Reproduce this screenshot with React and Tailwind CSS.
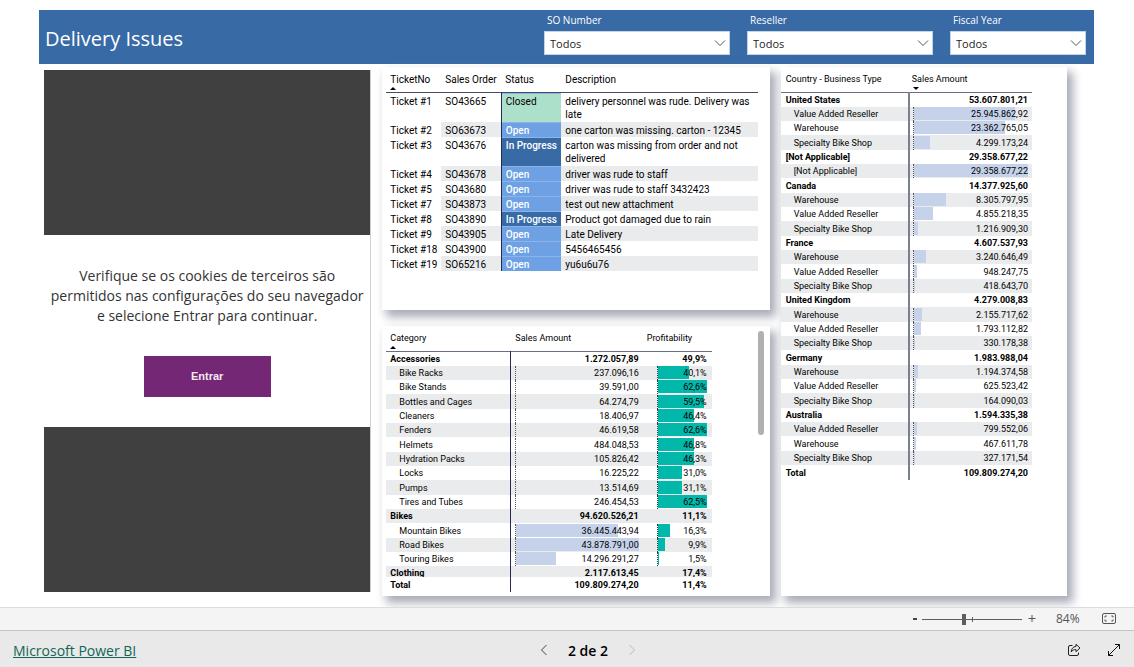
import React, { useState } from "react";

const tickets = [
  ["Ticket #1", "SO43665", "Closed", "delivery personnel was rude. Delivery was late"],
  ["Ticket #2", "SO63673", "Open", "one carton was missing. carton - 12345"],
  ["Ticket #3", "SO43676", "In Progress", "carton was missing from order and not delivered"],
  ["Ticket #4", "SO43678", "Open", "driver was rude to staff"],
  ["Ticket #5", "SO43680", "Open", "driver was rude to staff 3432423"],
  ["Ticket #7", "SO43873", "Open", "test out new attachment"],
  ["Ticket #8", "SO43890", "In Progress", "Product got damaged due to rain"],
  ["Ticket #9", "SO43905", "Open", "Late Delivery"],
  ["Ticket #18", "SO43900", "Open", "5456465456"],
  ["Ticket #19", "SO65216", "Open", "yu6u6u76"],
];

const statusClass = {
  Closed: "bg-[#ade0ca] text-black",
  Open: "bg-[#6ea1e3] font-medium text-white",
  "In Progress": "bg-[#386aa6] font-medium text-white",
};

const products = [
  { name: "Accessories", amount: "1.272.057,89", profit: "49,9%", group: true },
  { name: "Bike Racks", amount: "237.096,16", profit: "40,1%" },
  { name: "Bike Stands", amount: "39.591,00", profit: "62,6%" },
  { name: "Bottles and Cages", amount: "64.274,79", profit: "59,5%" },
  { name: "Cleaners", amount: "18.406,97", profit: "46,4%" },
  { name: "Fenders", amount: "46.619,58", profit: "62,6%" },
  { name: "Helmets", amount: "484.048,53", profit: "46,8%" },
  { name: "Hydration Packs", amount: "105.826,42", profit: "46,3%" },
  { name: "Locks", amount: "16.225,22", profit: "31,0%" },
  { name: "Pumps", amount: "13.514,69", profit: "31,1%" },
  { name: "Tires and Tubes", amount: "246.454,53", profit: "62,5%" },
  { name: "Bikes", amount: "94.620.526,21", profit: "11,1%", group: true },
  { name: "Mountain Bikes", amount: "36.445.443,94", profit: "16,3%" },
  { name: "Road Bikes", amount: "43.878.791,00", profit: "9,9%" },
  { name: "Touring Bikes", amount: "14.296.291,27", profit: "1,5%" },
];

const countries = [
  ["United States", "53.607.801,21", true],
  ["Value Added Reseller", "25.945.862,92"],
  ["Warehouse", "23.362.765,05"],
  ["Specialty Bike Shop", "4.299.173,24"],
  ["[Not Applicable]", "29.358.677,22", true],
  ["[Not Applicable]", "29.358.677,22"],
  ["Canada", "14.377.925,60", true],
  ["Warehouse", "8.305.797,95"],
  ["Value Added Reseller", "4.855.218,35"],
  ["Specialty Bike Shop", "1.216.909,30"],
  ["France", "4.607.537,93", true],
  ["Warehouse", "3.240.646,49"],
  ["Value Added Reseller", "948.247,75"],
  ["Specialty Bike Shop", "418.643,70"],
  ["United Kingdom", "4.279.008,83", true],
  ["Warehouse", "2.155.717,62"],
  ["Value Added Reseller", "1.793.112,82"],
  ["Specialty Bike Shop", "330.178,38"],
  ["Germany", "1.983.988,04", true],
  ["Warehouse", "1.194.374,58"],
  ["Value Added Reseller", "625.523,42"],
  ["Specialty Bike Shop", "164.090,03"],
  ["Australia", "1.594.335,38", true],
  ["Value Added Reseller", "799.552,06"],
  ["Warehouse", "467.611,78"],
  ["Specialty Bike Shop", "327.171,54"],
];

const toNumber = (s) => parseFloat(s.replace("%", "").replace(/\./g, "").replace(",", "."));

function SortArrow({ down }) {
  return (
    <svg className="absolute bottom-0.5 left-1 h-[3px] w-[6px]" viewBox="0 0 6 3" aria-hidden="true">
      <path d={down ? "M0 0h6L3 3z" : "M0 3h6L3 0z"} fill="#000" />
    </svg>
  );
}

function BarCell({ text, max, color, axis }) {
  return (
    <div className={`grid h-[14px] border-l border-dotted ${axis}`}>
      <span
        className={`col-start-1 row-start-1 h-[13px] ${color}`}
        style={{ width: `${(toNumber(text) / max) * 100}%` }}
      />
      <span className="col-start-1 row-start-1 text-right">{text}</span>
    </div>
  );
}

function Slicer({ id, label, width }) {
  return (
    <div className={`flex flex-col gap-1 ${width}`}>
      <label htmlFor={id} className="pl-[3px] text-[10px] leading-[14px] text-white">
        {label}
      </label>
      <div className="relative">
        <select
          id={id}
          className="block h-6 w-full appearance-none border border-[#c5d3e6] bg-white pt-0.5 pl-[5px] text-[11px] text-[#252423] outline-none"
        >
          <option>Todos</option>
        </select>
        <svg
          className="pointer-events-none absolute top-2 right-1 h-2 w-3"
          viewBox="0 0 12 8"
          fill="none"
          stroke="#555"
          aria-hidden="true"
        >
          <path d="M1 1.500 6 6.500 11 1.500" />
        </svg>
      </div>
    </div>
  );
}

const panel = "bg-white shadow-[5px_6px_9px_1px_#a9acb8]";
const matrixTable = "w-full table-fixed border-collapse text-left font-['Roboto',sans-serif] text-[9px] leading-[14px] text-black";
const matrixRow = "h-[14px] even:bg-[#eaebec] nth-[3n+1]:h-[15px]";

function TicketsTable() {
  return (
    <section className={`${panel} h-[243px] pr-3 pl-1`}>
      <table className="w-full table-fixed border-collapse text-left font-['Roboto',sans-serif] text-[10px] leading-[13px] text-black">
        <thead>
          <tr className="h-[25px] border-b border-[#4a4a68] align-top">
            <th className="relative w-[55px] pt-1.5 pl-1 font-normal">
              TicketNo
              <SortArrow />
            </th>
            <th className="w-[60px] pt-1.5 pl-1 font-normal">Sales Order</th>
            <th className="w-[60px] pt-1.5 pl-1 font-normal">Status</th>
            <th className="pt-1.5 pl-1 font-normal">Description</th>
          </tr>
        </thead>
        <tbody>
          {tickets.map(([no, order, status, text]) => (
            <tr key={no} className="group align-top first:h-[30px] nth-3:h-[29px]">
              <td className="pt-0.5 pl-1">{no}</td>
              <td className="pt-0.5 pl-1 group-even:bg-[#eaebec]">{order}</td>
              <td
                className={`border-l border-l-[#252a50] pt-0.5 pl-1 whitespace-nowrap shadow-[inset_0_1px_#8db4e8] ${statusClass[status]}`}
              >
                {status}
              </td>
              <td className="pt-0.5 pl-1 group-even:bg-[#eaebec]">{text}</td>
            </tr>
          ))}
        </tbody>
      </table>
    </section>
  );
}

function ProductMatrix() {
  return (
    <section className={`${panel} flex h-[270px] pr-1.5 pl-1`}>
      <div className="flex-1">
        <table className={matrixTable}>
          <thead>
            <tr className="h-[25px] border-b border-[#6b6f85] align-top">
              <th className="relative w-[124px] pt-[5px] pl-1 font-normal">
                Category
                <SortArrow />
              </th>
              <th className="pt-[5px] pl-[5px] font-normal">Sales Amount</th>
              <th className="w-[69px] pt-[5px] pl-1 font-normal">Profitability</th>
            </tr>
          </thead>
          <tbody>
            {products.map((p) => (
              <tr key={p.name} className={matrixRow}>
                <td className={`border-r border-[#252a50] py-0 ${p.group ? "pl-1 font-bold" : "pl-[13px]"}`}>
                  {p.name}
                </td>
                <td className={`py-0 pr-1 pl-1 text-right ${p.group ? "font-bold" : ""}`}>
                  {p.group ? (
                    p.amount
                  ) : (
                    <BarCell
                      text={p.amount}
                      max={43878791}
                      color={toNumber(p.amount) > 1000000 ? "bg-[#c5d2ea]" : ""}
                      axis="border-[#555]"
                    />
                  )}
                </td>
                <td className={`py-0 pr-[5px] pl-3.5 text-right ${p.group ? "font-bold" : ""}`}>
                  {p.group ? (
                    p.profit
                  ) : (
                    <BarCell text={p.profit} max={62.6} color="bg-[#01b8aa]" axis="border-[#144]" />
                  )}
                </td>
              </tr>
            ))}
            <tr className="bg-[#eaebec] font-bold">
              <td className="border-r border-[#252a50] p-0 pl-1">
                <div className="h-[11px] overflow-hidden">Clothing</div>
              </td>
              <td className="p-0 pr-1 text-right">
                <div className="h-[11px] overflow-hidden">2.117.613,45</div>
              </td>
              <td className="p-0 pr-[5px] text-right">
                <div className="h-[11px] overflow-hidden">17,4%</div>
              </td>
            </tr>
          </tbody>
          <tfoot>
            <tr className="h-[15px] font-bold">
              <td className="border-r border-[#252a50] p-0 pl-1">Total</td>
              <td className="p-0 pr-1 text-right">109.809.274,20</td>
              <td className="p-0 pr-[5px] text-right">11,4%</td>
            </tr>
          </tfoot>
        </table>
      </div>
      <div className="mt-[5px] ml-[46px] h-[104px] w-1.5 rounded-full bg-[#b0b0b0]" />
    </section>
  );
}

function CountryMatrix() {
  return (
    <section className={`${panel} pr-[35px]`}>
      <table className={matrixTable}>
        <thead>
          <tr className="h-[25px] border-b border-[#6b6f85] align-top">
            <th className="w-[128px] pt-[5px] pl-[5px] font-normal">Country - Business Type</th>
            <th className="relative pt-[5px] pl-[3px] font-normal">
              Sales Amount
              <SortArrow down />
            </th>
          </tr>
        </thead>
        <tbody>
          {countries.map(([name, amount, group], i) => (
            <tr key={i} className={matrixRow}>
              <td className={`border-r-2 border-[#7b7f92] py-0 ${group ? "pl-[5px] font-bold" : "pl-[13px]"}`}>{name}</td>
              <td className={`py-0 pr-1 pl-[3px] text-right ${group ? "font-bold" : ""}`}>
                {group ? amount : <BarCell text={amount} max={29358677} color="bg-[#c5d2ea]" axis="border-[#555]" />}
              </td>
            </tr>
          ))}
        </tbody>
        <tfoot>
          <tr className="h-[15px] font-bold">
            <td className="border-r-2 border-[#7b7f92] p-0 pl-[5px]">Total</td>
            <td className="p-0 pr-1 text-right">109.809.274,20</td>
          </tr>
        </tfoot>
      </table>
    </section>
  );
}

function SignInPanel() {
  return (
    <section className="mt-[3px] mb-1 flex flex-col border-r border-[#d0d0d0]">
      <div className="flex-1 bg-[#404040]" />
      <div className="flex h-[192px] flex-col items-center justify-between pt-[31px] pb-[30px]">
        <p className="text-center text-[14px] leading-5 whitespace-nowrap text-[#333]">
          Verifique se os cookies de terceiros são
          <br />
          permitidos nas configurações do seu navegador
          <br />e selecione Entrar para continuar.
        </p>
        <button className="h-[41px] w-[127px] bg-[#742774] text-[11px] text-[#f3eaf3]">
          <span className="font-['Liberation_Sans',sans-serif] font-bold">Entrar</span>
        </button>
      </div>
      <div className="flex-1 bg-[#404040]" />
    </section>
  );
}

function ZoomBar() {
  const [zoom, setZoom] = useState(84);
  return (
    <div className="flex h-[23px] items-center justify-end border-t border-[#dcdcdc] bg-[#f4f4f4] pr-[18px] text-[#555]">
      <button aria-label="Zoom out" className="flex h-4 w-3.5 items-center justify-center">
        <svg className="h-2 w-2" viewBox="0 0 8 8" aria-hidden="true">
          <path d="M2 4h4" stroke="#444" strokeWidth="2" />
        </svg>
      </button>
      <div className="relative flex items-center">
        <input
          type="range"
          aria-label="Zoom"
          min="0"
          max="200"
          value={zoom}
          onChange={(e) => setZoom(Number(e.target.value))}
          className="h-3 w-[100px] appearance-none bg-transparent [&::-webkit-slider-runnable-track]:h-px [&::-webkit-slider-runnable-track]:bg-[#605e5c] [&::-webkit-slider-thumb]:-mt-[5px] [&::-webkit-slider-thumb]:h-[11px] [&::-webkit-slider-thumb]:w-1 [&::-webkit-slider-thumb]:appearance-none [&::-webkit-slider-thumb]:bg-[#605e5c]"
        />
        <span className="pointer-events-none absolute left-1/2 h-[5px] w-px bg-[#605e5c]" />
      </div>
      <button aria-label="Zoom in" className="flex h-4 w-5 items-center justify-center">
        <svg className="h-2 w-2" viewBox="0 0 8 8" aria-hidden="true">
          <path d="M.5 3.500h7M4 0v7" stroke="#555" fill="none" />
        </svg>
      </button>
      <span className="w-[58px] pl-3.5 text-[12px]">{zoom}%</span>
      <button aria-label="Fit to page" className="ml-0.5">
        <svg className="block h-3 w-3.5" viewBox="0 0 14 12" fill="none" stroke="#555" aria-hidden="true">
          <rect x="0.500" y="0.500" width="13" height="10" rx="1.500" />
          <path d="M3 4.500V3h1.700M9.300 3H11V4.500M11 6.500V8H9.300M4.700 8H3V6.500" />
        </svg>
      </button>
    </div>
  );
}

function Footer() {
  return (
    <footer className="grid h-[37px] grid-cols-[527fr_96px_485fr] items-center border-t border-[#c4c4c4] bg-[#e9e9e9] px-[13px] pt-0.5">
      <a href="https://powerbi.microsoft.com" className="justify-self-start text-[14px] text-[#106656] underline">
        Microsoft Power BI
      </a>
      <nav className="flex items-center justify-between text-[14px] font-semibold text-black">
        <button aria-label="Previous page">
          <svg className="h-3 w-2" viewBox="0 0 8 12" fill="none" stroke="#444" aria-hidden="true">
            <path d="M6.500 1 1.500 6 6.500 11" />
          </svg>
        </button>
        <span>2 de 2</span>
        <button aria-label="Next page" disabled>
          <svg className="h-3 w-2" viewBox="0 0 8 12" fill="none" stroke="#bbb" aria-hidden="true">
            <path d="M1.500 1 6.500 6 1.500 11" />
          </svg>
        </button>
      </nav>
      <div className="flex items-center gap-[26px] justify-self-end">
        <button aria-label="Share">
          <svg className="block h-3.5 w-3.5" viewBox="0 0 14 14" fill="none" stroke="#222" strokeLinejoin="round" aria-hidden="true">
            <path d="M5.500 2.500H3A1.500 1.500 0 0 0 1.500 4v7A1.500 1.500 0 0 0 3 12.500h7a1.500 1.500 0 0 0 1.500-1.500v-1.500" />
            <path d="M9 1.200 13 5 9 8.700V6.600C6.800 6.500 5.400 7.200 4.200 8.900 4.400 5.800 6 3.700 9 3.400z" />
          </svg>
        </button>
        <button aria-label="Full screen">
          <svg className="block h-3.5 w-3.5" viewBox="0 0 14 14" fill="none" stroke="#111" aria-hidden="true">
            <path d="M1.500 12.500 12.500 1.500M8 1.500h4.500V6M1.500 8v4.500H6" />
          </svg>
        </button>
      </div>
    </footer>
  );
}

export default function App() {
  return (
    <div className="flex min-h-screen flex-col bg-white font-['Open_Sans','Noto_Sans',sans-serif]">
      <main className="flex-1 overflow-hidden pt-2.5 pr-10 pb-[11px] pl-[39px]">
        <header className="flex h-[54px] gap-[17px] bg-[#386aa6] pt-[3px] pr-2 pl-1.5">
          <h1 className="flex-1 self-center text-[20px] leading-6 text-white">Delivery Issues</h1>
          <Slicer id="so-number" label="SO Number" width="w-[186px]" />
          <Slicer id="reseller" label="Reseller" width="w-[186px]" />
          <Slicer id="fiscal-year" label="Fiscal Year" width="w-[136px]" />
        </header>
        <div className="mt-[3px] grid grid-cols-[327fr_387fr_286fr] gap-x-[11px] pr-[27px] pl-[5px]">
          <SignInPanel />
          <div className="flex flex-col gap-4">
            <TicketsTable />
            <ProductMatrix />
          </div>
          <CountryMatrix />
        </div>
      </main>
      <ZoomBar />
      <Footer />
    </div>
  );
}
